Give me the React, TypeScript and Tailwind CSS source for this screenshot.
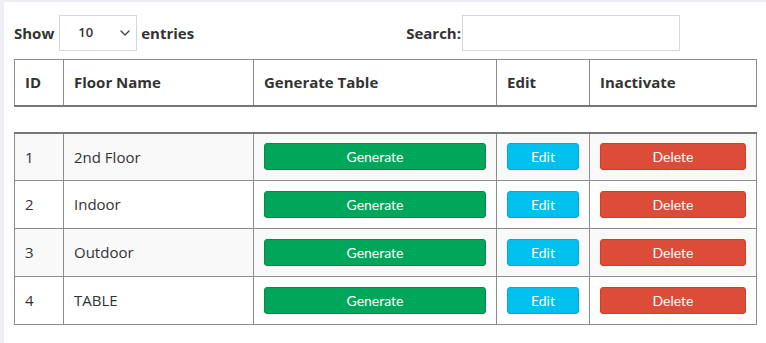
import { ChevronDown } from "lucide-react";

type Floor = { id: number; name: string };

const floors: Floor[] = [
  { id: 1, name: "2nd Floor" },
  { id: 2, name: "Indoor" },
  { id: 3, name: "Outdoor" },
  { id: 4, name: "TABLE" },
];

const cell = "border border-[#8c8c8c] px-[10px] text-left align-middle";

export default function App() {
  return (
    <div className="min-h-screen bg-[#ecf0f5] pt-[2px] pl-[4px] font-['Open_Sans',sans-serif] text-[15px] text-[#333]">
      <div className="h-[341px] bg-white pl-[10px] pt-[13px]">
        <div className="flex h-[36px] w-[742px] items-center">
          <span className="font-bold">Show</span>
          <div className="ml-[5px] flex h-[36px] w-[78px] items-center justify-between border border-[#d2d6de] pl-[18px] pr-[3px]">
            <span className="text-[13px] font-semibold">10</span>
            <ChevronDown size={16} strokeWidth={2} className="text-[#444]" />
          </div>
          <span className="ml-[4px] font-bold">entries</span>
          <div className="mr-[76px] ml-auto flex items-center">
            <span className="font-bold">Search:</span>
            <div className="ml-[1px] h-[36px] w-[218px] border border-[#d2d6de]" />
          </div>
        </div>

        <table className="mt-[8px] w-[742px] table-fixed border-collapse">
          <thead>
            <tr className="h-[46px]">
              <th className={`${cell} w-[49px] border-b-2 border-b-[#777] font-bold`}>ID</th>
              <th className={`${cell} w-[190px] border-b-2 border-b-[#777] font-bold`}>Floor Name</th>
              <th className={`${cell} w-[243px] border-b-2 border-b-[#777] font-bold`}>Generate Table</th>
              <th className={`${cell} w-[93px] border-b-2 border-b-[#777] font-bold`}>Edit</th>
              <th className={`${cell} w-[167px] border-b-2 border-b-[#777] font-bold`}>Inactivate</th>
            </tr>
          </thead>
        </table>

        <table className="mt-[25px] w-[742px] table-fixed border-collapse border-t-2 border-t-[#777]">
          <tbody>
            {floors.map((f, i) => (
              <tr key={f.id} className={`h-[48px] ${i % 2 === 0 ? "bg-[#f9f9f9]" : "bg-white"}`}>
                <td className={`${cell} w-[49px]`}>{f.id}</td>
                <td className={`${cell} w-[190px]`}>{f.name}</td>
                <td className={`${cell} w-[243px]`}>
                  <button className="block h-[27px] w-full rounded-[3px] border border-[#008d4c] bg-[#00a65a] font-['Lato',sans-serif] text-[14px] text-white">
                    Generate
                  </button>
                </td>
                <td className={`${cell} w-[93px]`}>
                  <button className="block h-[27px] w-[72px] rounded-[3px] border border-[#00acd6] bg-[#00c0ef] font-['Lato',sans-serif] text-[14px] text-white">
                    Edit
                  </button>
                </td>
                <td className={`${cell} w-[167px]`}>
                  <button className="block h-[27px] w-full rounded-[3px] border border-[#d73925] bg-[#dd4b39] font-['Lato',sans-serif] text-[14px] text-white">
                    Delete
                  </button>
                </td>
              </tr>
            ))}
          </tbody>
        </table>
      </div>
    </div>
  );
}
